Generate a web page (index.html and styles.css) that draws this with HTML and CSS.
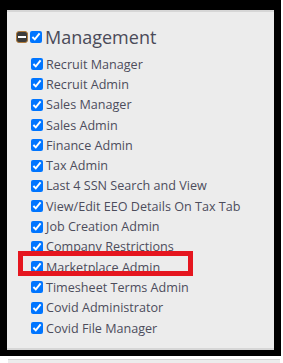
FILE: index.html
```html
<!DOCTYPE html>
<html lang="en">
<head>
  <meta charset="UTF-8" />
  <title>Permissions</title>
  <link rel="stylesheet" href="styles.css">
</head>
<body>
  <div class="frame">
    <div class="panel">
      <div class="group-head">
        <span class="toggle"><span class="minus"></span></span>
        <input type="checkbox" checked>
        <span class="group-title">Management</span>
      </div>
      <ul class="perm-list">
        <li><input type="checkbox" checked><label>Recruit Manager</label></li>
        <li><input type="checkbox" checked><label>Recruit Admin</label></li>
        <li><input type="checkbox" checked><label>Sales Manager</label></li>
        <li><input type="checkbox" checked><label>Sales Admin</label></li>
        <li><input type="checkbox" checked><label>Finance Admin</label></li>
        <li><input type="checkbox" checked><label>Tax Admin</label></li>
        <li><input type="checkbox" checked><label>Last 4 SSN Search and View</label></li>
        <li><input type="checkbox" checked><label>View/Edit EEO Details On Tax Tab</label></li>
        <li><input type="checkbox" checked><label>Job Creation Admin</label></li>
        <li><input type="checkbox" checked><label>Company Restrictions</label></li>
        <li class="highlight"><input type="checkbox" checked><label>Marketplace Admin</label></li>
        <li><input type="checkbox" checked><label>Timesheet Terms Admin</label></li>
        <li><input type="checkbox" checked><label>Covid Administrator</label></li>
        <li><input type="checkbox" checked><label>Covid File Manager</label></li>
      </ul>
    </div>
  </div>
  <div class="next-panel"></div>
</body>
</html>
```

FILE: styles.css
```css
body {
  margin: 0;
  background: #fff;
  font-family: "Open Sans", sans-serif;
}
.frame {
  width: 267px;
  background: #000;
  padding: 10px 7px 6px 7px;
}
.panel {
  background: #ececec;
  border-top: 2px solid #d6d6d6;
  border-bottom: 2px solid #d6d6d6;
  height: 340px;
  padding: 14px 0 0 9px;
  box-sizing: border-box;
}
.group-head {
  display: flex;
  align-items: center;
  height: 22px;
}
.toggle {
  width: 12px;
  height: 12px;
  background: #3c3c3c;
  border: 1px solid #b07a3a;
  border-radius: 3px;
  box-sizing: border-box;
  display: flex;
  align-items: center;
  justify-content: center;
}
.minus {
  width: 8px;
  height: 2px;
  background: #fff;
}
.group-head input {
  margin: 0 0 0 2px;
  width: 12px;
  height: 12px;
}
.group-title {
  margin-left: 3px;
  font-size: 18px;
  color: #4a4a58;
}
.perm-list {
  list-style: none;
  margin: 6px 0 0 0;
  padding: 0 0 0 15px;
}
.perm-list li {
  display: flex;
  align-items: center;
  height: 20.3px;
  font-size: 12.6px;
  color: #4d4d5c;
}
.perm-list input {
  margin: 0 3px 0 0;
  width: 12px;
  height: 12px;
}
.highlight {
  position: relative;
}
.highlight::after {
  content: "";
  position: absolute;
  left: -13px;
  top: -6px;
  width: 165px;
  height: 15px;
  border: 5px solid #e5161f;
}
.next-panel {
  margin: 3px 3px 0 8px;
  height: 4px;
  background: #ececec;
  border-top: 1px solid #d6d6d6;
}
```
